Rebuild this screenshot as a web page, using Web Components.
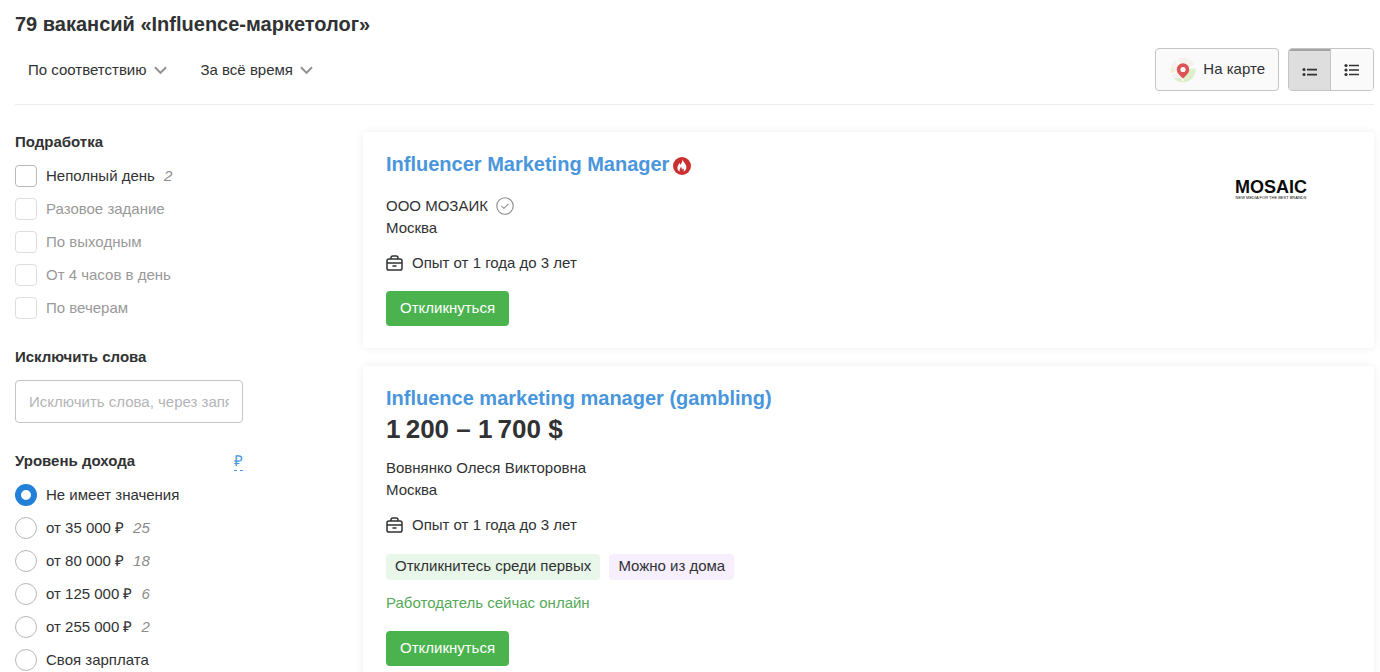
<!DOCTYPE html>
<html lang="ru">
<head>
<meta charset="utf-8">
<meta name="viewport" content="width=device-width, initial-scale=1">
<title>79 вакансий «Influence-маркетолог»</title>
<style>
  body {
    margin: 0;
    background: #fff;
    color: #303233;
    font: 15px/22px "Liberation Sans", Arial, sans-serif;
  }
</style>
</head>
<body>
<vacancy-page></vacancy-page>

<template id="t-page">
  <style>
    :host { display: block; padding: 12px 6px 24px 15px; }
    header { border-bottom: 1px solid #ececec; padding-bottom: 13px; }
    h1 { margin: 0; font-size: 20px; line-height: 24px; }
    .bar { display: flex; align-items: center; gap: 9px; padding-top: 12px; }
    .filters { display: flex; gap: 34px; flex: 1; padding-left: 13px; }
    .cols { display: flex; gap: 120px; padding-top: 26px; }
    aside { flex: 0 0 228px; }
    main { flex: 1; min-width: 0; display: grid; gap: 18px; align-content: start; padding-top: 1px; }
  </style>
  <header>
    <h1>79 вакансий «Influence-маркетолог»</h1>
    <div class="bar">
      <div class="filters">
        <drop-filter label="Сортировка" value="По соответствию"></drop-filter>
        <drop-filter label="Период" value="За всё время"></drop-filter>
      </div>
      <map-button>На карте</map-button>
      <view-toggle></view-toggle>
    </div>
  </header>
  <div class="cols">
    <aside>
      <filter-group heading="Подработка">
        <check-row kind="checkbox" count="2">Неполный день</check-row>
        <check-row kind="checkbox" disabled>Разовое задание</check-row>
        <check-row kind="checkbox" disabled>По выходным</check-row>
        <check-row kind="checkbox" disabled>От 4 часов в день</check-row>
        <check-row kind="checkbox" disabled>По вечерам</check-row>
      </filter-group>
      <filter-group heading="Исключить слова">
        <exclude-field></exclude-field>
      </filter-group>
      <filter-group heading="Уровень дохода">
        <currency-link slot="aside">₽</currency-link>
        <check-row kind="radio" checked>Не имеет значения</check-row>
        <check-row kind="radio" count="25">от 35 000 ₽</check-row>
        <check-row kind="radio" count="18">от 80 000 ₽</check-row>
        <check-row kind="radio" count="6">от 125 000 ₽</check-row>
        <check-row kind="radio" count="2">от 255 000 ₽</check-row>
        <check-row kind="radio">Своя зарплата</check-row>
      </filter-group>
    </aside>
    <main>
      <vacancy-card heading="Influencer Marketing Manager" company="ООО МОЗАИК" city="Москва" experience="Опыт от 1 года до 3 лет" hot verified>
        <mosaic-logo slot="logo"></mosaic-logo>
      </vacancy-card>
      <vacancy-card heading="Influence marketing manager (gambling)" salary="1&#8201;200 – 1&#8201;700 $" company="Вовнянко Олеся Викторовна" city="Москва" experience="Опыт от 1 года до 3 лет">
        <tag-chip slot="tags" tone="green">Откликнитесь среди первых</tag-chip>
        <tag-chip slot="tags" tone="violet">Можно из дома</tag-chip>
        <span slot="online">Работодатель сейчас онлайн</span>
      </vacancy-card>
    </main>
  </div>
</template>

<template id="t-drop">
  <style>
    :host { display: inline-flex; }
    label { display: inline-flex; align-items: center; gap: 7px; }
    select {
      appearance: none; field-sizing: content; border: 0; padding: 0; margin: 0;
      background: none; color: inherit; font: inherit; cursor: pointer;
    }
    svg { pointer-events: none; margin-top: 2px; }
  </style>
  <label>
    <select><option></option></select>
    <svg width="13" height="9" viewBox="0 0 13 9" fill="none" stroke="#8f9194" stroke-width="2"><path d="M1 1.3l5.5 5.6L12 1.3"/></svg>
  </label>
</template>

<template id="t-map">
  <style>
    :host { display: block; }
    button {
      display: flex; align-items: center; gap: 7px; box-sizing: border-box; height: 43px;
      padding: 0 13px 0 14px; border: 1px solid #c4c4c4; border-radius: 4px;
      background: #fafafa; color: inherit; font: inherit; cursor: pointer;
    }
    span { padding-bottom: 2px; }
  </style>
  <button type="button">
    <svg width="26" height="26" viewBox="0 0 26 26">
      <circle cx="13" cy="13" r="12.5" fill="#f3f2ef"/>
      <path d="M4 21.500A12.500 12.500 0 0 0 25.500 12L21 12 10 21z" fill="#dcefc9"/>
      <path d="M1 17L25 9M7 2l6 22" stroke="#fff" stroke-width="1.500"/>
      <path d="M1 10l3 2-1 5-2-2z" fill="#f8eec4"/>
      <path d="M13 21.500C9 17.500 6.800 15.400 6.800 12.400a6.200 6.200 0 0 1 12.400 0c0 3-2.200 5.100-6.200 9.100z" fill="#dd5353"/>
      <circle cx="13" cy="12.500" r="2.600" fill="#fff"/>
    </svg>
    <span><slot></slot></span>
  </button>
</template>

<template id="t-toggle">
  <style>
    :host { display: flex; box-sizing: border-box; height: 43px; border: 1px solid #c4c4c4; border-radius: 4px; overflow: hidden; }
    button { display: grid; place-items: center; width: 42px; padding: 0; border: 0; background: #fafafa; cursor: pointer; }
    button[aria-pressed="true"] { background: #dedede; box-shadow: inset 0 2px #a3a3a3; border-right: 1px solid #c4c4c4; padding-top: 4px; }
  </style>
  <button type="button" aria-pressed="true" aria-label="Кратко">
    <svg width="16" height="10" viewBox="0 0 16 10" fill="#303233"><circle cx="2" cy="2.500" r="1.500"/><circle cx="2" cy="7.500" r="1.500"/><path d="M5 1.700h10v1.700H5zM5 6.700h10v1.700H5z"/></svg>
  </button>
  <button type="button" aria-pressed="false" aria-label="Подробно">
    <svg width="16" height="14" viewBox="0 0 16 14" fill="#303233"><circle cx="2" cy="2.500" r="1.600"/><circle cx="2" cy="7" r="1.600"/><circle cx="2" cy="11.500" r="1.600"/><path d="M5 1.800h10v1.400H5zM5 6.300h10v1.400H5zM5 10.800h10v1.400H5z"/></svg>
  </button>
</template>

<template id="t-group">
  <style>
    :host { display: block; margin-bottom: 27px; }
    .head { display: flex; justify-content: space-between; align-items: center; margin-bottom: 12px; }
    h2 { margin: 0; font-size: 15px; line-height: 22px; }
    .rows { display: grid; gap: 11px; }
  </style>
  <div class="head"><h2></h2><slot name="aside"></slot></div>
  <div class="rows"><slot></slot></div>
</template>

<template id="t-check">
  <style>
    :host { display: block; }
    label { display: flex; align-items: center; cursor: pointer; }
    input {
      appearance: none; box-sizing: border-box; width: 22px; height: 22px; margin: 0 9px 0 0;
      border: 1px solid #b9b9b9; border-radius: 4px; background: #fff;
    }
    input[type="radio"] { border-radius: 50%; }
    input[type="radio"]:checked { border: 6px solid #2280d8; }
    em { margin-left: 9px; color: #8c8c8c; }
    :host([disabled]) label { color: #999; }
    :host([disabled]) input { border-color: #dedede; }
  </style>
  <label><input><span><slot></slot></span><em></em></label>
</template>

<template id="t-exclude">
  <style>
    :host { display: block; }
    input {
      display: block; box-sizing: border-box; width: 100%; height: 43px; padding: 0 13px;
      border: 1px solid #c4c4c4; border-radius: 4px; background: #fff; color: inherit; font: inherit;
    }
    input::placeholder { color: #b3b5b8; }
  </style>
  <input type="text" placeholder="Исключить слова, через запятую" aria-label="Исключить слова">
</template>

<template id="t-currency">
  <style>
    :host { display: block; line-height: 18px; }
    a { display: block; color: #4a96dc; text-decoration: none; border-bottom: 1px dashed #4a96dc; }
  </style>
  <a href="#currency"><slot></slot></a>
</template>

<template id="t-chip">
  <style>
    :host { display: block; padding: 0 9px 2px; border-radius: 4px; line-height: 24px; background: #e8f7e9; }
    :host([tone="violet"]) { background: #f7effe; }
  </style>
  <slot></slot>
</template>

<template id="t-logo">
  <style>
    :host { display: block; color: #0b0b0b; text-align: center; }
    b, small { display: block; white-space: nowrap; }
    b { font-size: 18px; line-height: 18px; }
    small { font-size: 4px; line-height: 4px; }
  </style>
  <b>MOSAIC</b><small>NEW MEDIA FOR THE BEST BRANDS</small>
</template>

<template id="t-card">
  <style>
    :host { display: block; padding: 20px 24px 22px 23px; border-radius: 4px; background: #fff; box-shadow: 0 0 10px rgba(0, 0, 0, .07); }
    article { display: flex; justify-content: space-between; }
    .title { display: flex; align-items: center; gap: 4px; }
    h2 { margin: 0; font-size: 20px; line-height: 24px; }
    h2 a { color: #4a96dc; text-decoration: none; }
    .title svg { margin-top: 3px; }
    .salary { margin: 3px 0 0; font-size: 26px; line-height: 32px; font-weight: bold; }
    .company { display: flex; align-items: center; gap: 8px; margin-top: 19px; }
    .salary:not([hidden]) + .company { margin-top: 12px; }
    .exp { display: flex; align-items: center; gap: 9px; margin-top: 13px; }
    .tags { display: flex; gap: 9px; margin-top: 18px; }
    .online { margin-top: 12px; color: #55a957; }
    .apply {
      display: block; height: 35px; margin-top: 17px; padding: 0 14px 2px; border: 0; border-radius: 4px;
      background: #4bb34e; color: #fff; font: inherit; cursor: pointer;
    }
    .logo { display: grid; align-content: start; padding: 26px 43px 0 0; }
    [hidden] { display: none; }
  </style>
  <article>
    <div>
      <div class="title">
        <h2><a href="#vacancy"></a></h2>
        <svg class="hot" width="18" height="18" viewBox="0 0 18 18">
          <circle cx="9" cy="9" r="9" fill="#cb2f30"/>
          <path d="M9.300 2.300c.3 2.100 3.900 4.400 4.100 7.700.1 2.300-1.300 4-3 4.700.8-1.300.5-2.600-.5-3.500-.2.900-.6 1.300-1.100 1.500.1-1.300-.3-2.200-1-2.900-.1 1.500-1.300 2.200-1.200 3.600 0 .5.200.9.400 1.200-1.500-.6-2.700-2-2.600-3.900.1-2.200 1.500-2.900 2-4.600.5.500.8 1 .9 1.700C8.700 6.500 9.500 4.500 9.300 2.300z" fill="#fff"/>
        </svg>
      </div>
      <p class="salary"></p>
      <div class="company">
        <span class="name"></span>
        <svg class="verified" width="18" height="18" viewBox="0 0 18 18" fill="none" stroke="#8c8c8c" stroke-width="1.100"><circle cx="9" cy="9" r="8.200"/><path d="M5.500 9.200l2.400 2.100 4.500-4.400"/></svg>
      </div>
      <div class="city"></div>
      <div class="exp">
        <svg width="17" height="16" viewBox="0 0 17 16" fill="none" stroke="#303233" stroke-width="1.500"><rect x="1" y="4" width="15" height="11" rx="1.800"/><path d="M5 4V2.800C5 1.700 5.700 1 6.800 1h3.400C11.300 1 12 1.700 12 2.800V4M1 8h15M6.500 11h4"/></svg>
        <span class="years"></span>
      </div>
      <div class="tags"><slot name="tags"></slot></div>
      <div class="online"><slot name="online"></slot></div>
      <button class="apply" type="button">Откликнуться</button>
    </div>
    <div class="logo"><slot name="logo"></slot></div>
  </article>
</template>

<script>
  class TemplateElement extends HTMLElement {
    connectedCallback() {
      if (this.shadowRoot) return;
      const root = this.attachShadow({ mode: "open" });
      root.append(document.getElementById(this.constructor.template).content.cloneNode(true));
      this.fill(selector => root.querySelector(selector));
    }
    fill() {}
  }

  class DropFilter extends TemplateElement {
    static template = "t-drop";
    fill($) {
      $("option").textContent = this.getAttribute("value");
      $("select").setAttribute("aria-label", this.getAttribute("label"));
    }
  }
  class MapButton extends TemplateElement { static template = "t-map"; }
  class ViewToggle extends TemplateElement { static template = "t-toggle"; }
  class FilterGroup extends TemplateElement {
    static template = "t-group";
    fill($) { $("h2").textContent = this.getAttribute("heading"); }
  }
  class CheckRow extends TemplateElement {
    static template = "t-check";
    fill($) {
      const input = $("input");
      input.type = this.getAttribute("kind");
      input.checked = this.hasAttribute("checked");
      input.disabled = this.hasAttribute("disabled");
      if (this.hasAttribute("count")) $("em").textContent = this.getAttribute("count");
      else $("em").remove();
      // Radios in separate shadow roots do not form a native group.
      input.addEventListener("change", () => {
        if (input.type !== "radio") return;
        for (const row of this.parentElement.querySelectorAll("check-row")) {
          if (row !== this) row.shadowRoot.querySelector("input").checked = false;
        }
      });
    }
  }
  class ExcludeField extends TemplateElement { static template = "t-exclude"; }
  class CurrencyLink extends TemplateElement { static template = "t-currency"; }
  class TagChip extends TemplateElement { static template = "t-chip"; }
  class MosaicLogo extends TemplateElement { static template = "t-logo"; }
  class VacancyCard extends TemplateElement {
    static template = "t-card";
    fill($) {
      const parts = { "h2 a": "heading", ".salary": "salary", ".name": "company", ".city": "city", ".years": "experience" };
      for (const [selector, name] of Object.entries(parts)) $(selector).textContent = this.getAttribute(name) ?? "";
      $(".salary").hidden = !this.hasAttribute("salary");
      if (!this.hasAttribute("hot")) $(".hot").remove();
      if (!this.hasAttribute("verified")) $(".verified").remove();
      for (const name of ["tags", "online"]) {
        $("." + name).hidden = !this.querySelector(`[slot="${name}"]`);
      }
    }
  }
  class VacancyPage extends TemplateElement { static template = "t-page"; }

  customElements.define("drop-filter", DropFilter);
  customElements.define("map-button", MapButton);
  customElements.define("view-toggle", ViewToggle);
  customElements.define("filter-group", FilterGroup);
  customElements.define("check-row", CheckRow);
  customElements.define("exclude-field", ExcludeField);
  customElements.define("currency-link", CurrencyLink);
  customElements.define("tag-chip", TagChip);
  customElements.define("mosaic-logo", MosaicLogo);
  customElements.define("vacancy-card", VacancyCard);
  customElements.define("vacancy-page", VacancyPage);
</script>
</body>
</html>
